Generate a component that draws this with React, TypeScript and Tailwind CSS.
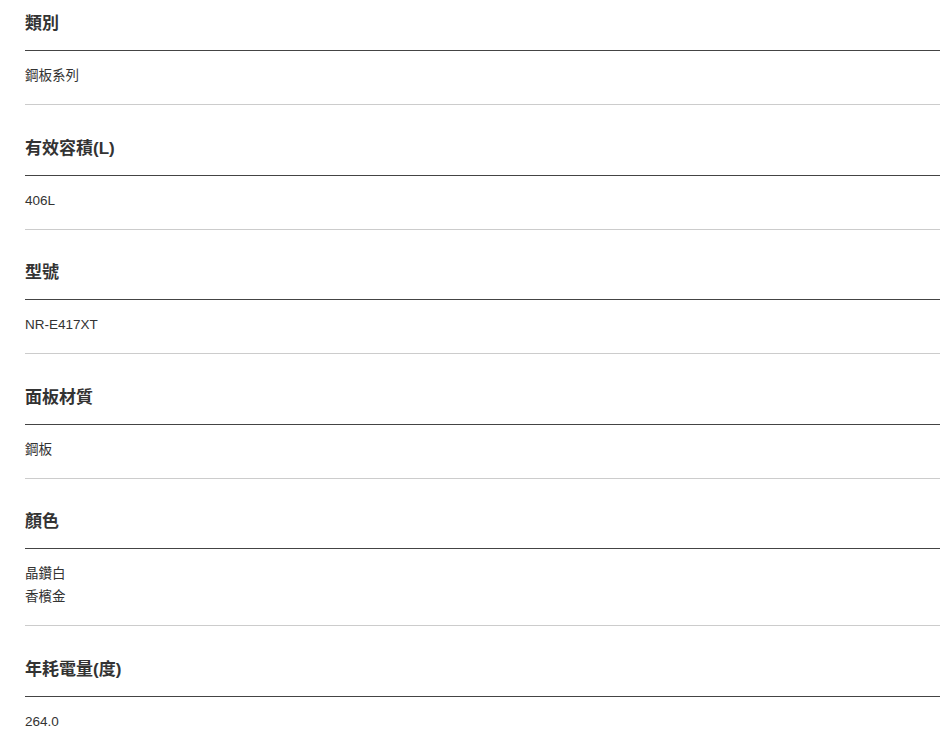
const specs = [
  { label: "類別", values: ["鋼板系列"] },
  { label: "有效容積(L)", values: ["406L"] },
  { label: "型號", values: ["NR-E417XT"] },
  { label: "面板材質", values: ["鋼板"] },
  { label: "顏色", values: ["晶鑽白", "香檳金"] },
  { label: "年耗電量(度)", values: ["264.0"] },
];

export default function App() {
  return (
    <div className="min-h-screen bg-white font-['Liberation_Sans','Noto_Sans_CJK_TC',sans-serif] text-[#333]">
      <div className="ml-[25px] w-[915px] flex flex-col gap-[19.6px]">
        {specs.map((s) => (
          <div key={s.label}>
            <div className="pt-[12px] pb-[14px] border-b border-[#444] text-[17px] leading-6 font-bold">
              {s.label}
            </div>
            <div className="pt-[13px] pb-[17px] border-b border-[#ccc] text-[13.5px] leading-[23px]">
              {s.values.map((v) => (
                <div key={v}>{v}</div>
              ))}
            </div>
          </div>
        ))}
      </div>
    </div>
  );
}
